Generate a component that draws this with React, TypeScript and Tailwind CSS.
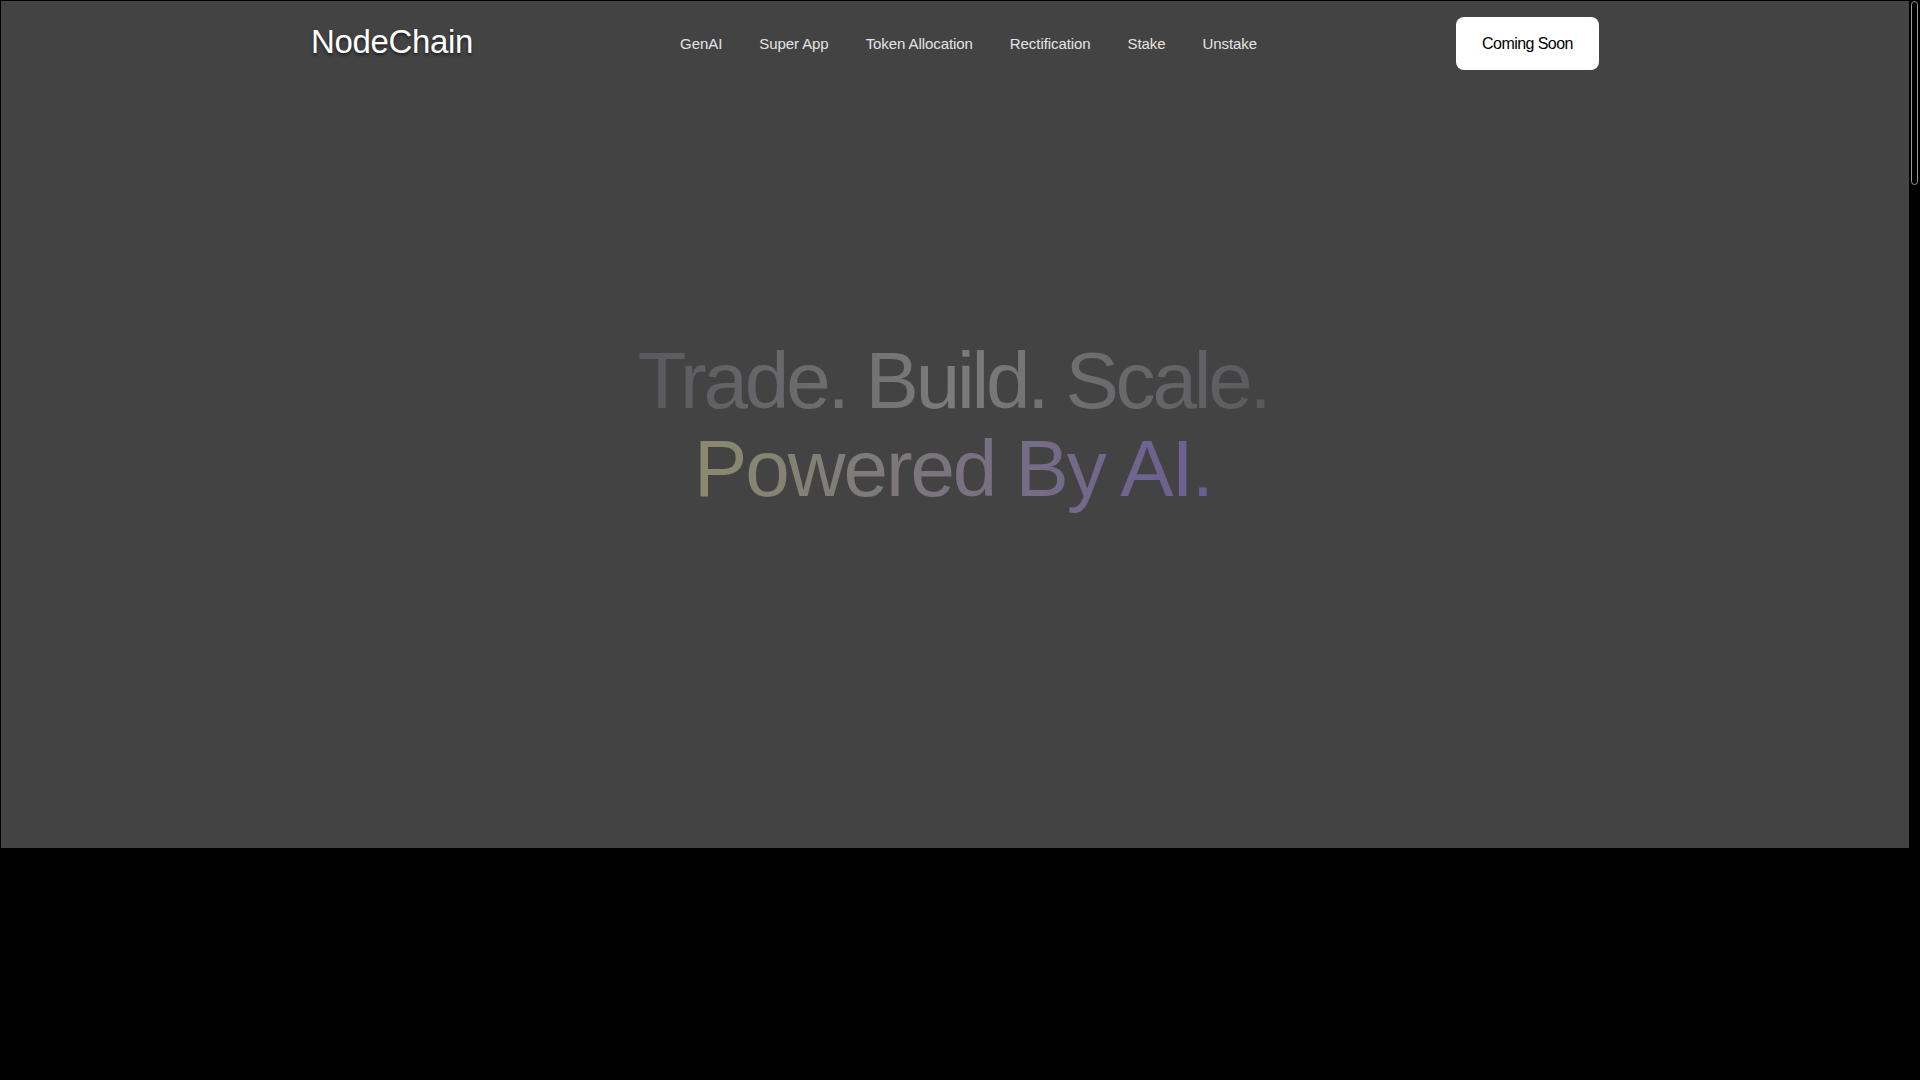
const links = ['GenAI', 'Super App', 'Token Allocation', 'Rectification', 'Stake', 'Unstake'];

function Header() {
  return (
    <header className="mx-auto flex h-[85px] w-[1288px] items-center justify-between">
      <a
        href="#"
        className="mb-[4px] text-[33px] leading-none text-white tracking-[-0.01em] [text-shadow:0_2px_3px_rgba(0,0,0,0.55)]"
      >
        NodeChain
      </a>
      <nav className="flex items-center gap-[37px] pl-[8px]">
        {links.map((link) => (
          <a key={link} href="#" className="text-[15px] leading-none text-[#e4e4e4] tracking-[-0.005em]">
            {link}
          </a>
        ))}
      </nav>
      <button className="flex h-[53px] w-[143px] items-center justify-center rounded-[8px] bg-white text-[16px] text-black tracking-[-0.035em]">
        Coming Soon
      </button>
    </header>
  );
}

function Hero() {
  return (
    <div className="flex flex-1 flex-col items-center justify-center pb-[85px] text-[80px] leading-[88px]">
      <h1 className="w-fit bg-linear-to-r from-[#58595e] via-[#7c7c7c] to-[#58595e] bg-clip-text pr-[4px] text-transparent tracking-[-0.04em]">
        Trade. Build. Scale.
      </h1>
      <h2 className="w-fit bg-linear-to-r from-[#8a8a6d] via-[#7a7280] to-[#6b5e93] bg-clip-text pr-[4px] text-transparent tracking-[-0.026em]">
        Powered By AI.
      </h2>
    </div>
  );
}

function Scrollbar() {
  return (
    <div className="w-[11px] shrink-0 bg-black pt-px">
      <div className="ml-[2px] h-[184px] w-[7px] rounded-full border border-[#9a9a9a] bg-black" />
    </div>
  );
}

export default function App() {
  return (
    <div className="flex h-screen overflow-hidden bg-black font-['Liberation_Sans',Arial,sans-serif]">
      <div className="flex-1">
        <section className="flex h-[848px] flex-col border-t border-l border-black bg-[#434343]">
          <Header />
          <Hero />
        </section>
      </div>
      <Scrollbar />
    </div>
  );
}
